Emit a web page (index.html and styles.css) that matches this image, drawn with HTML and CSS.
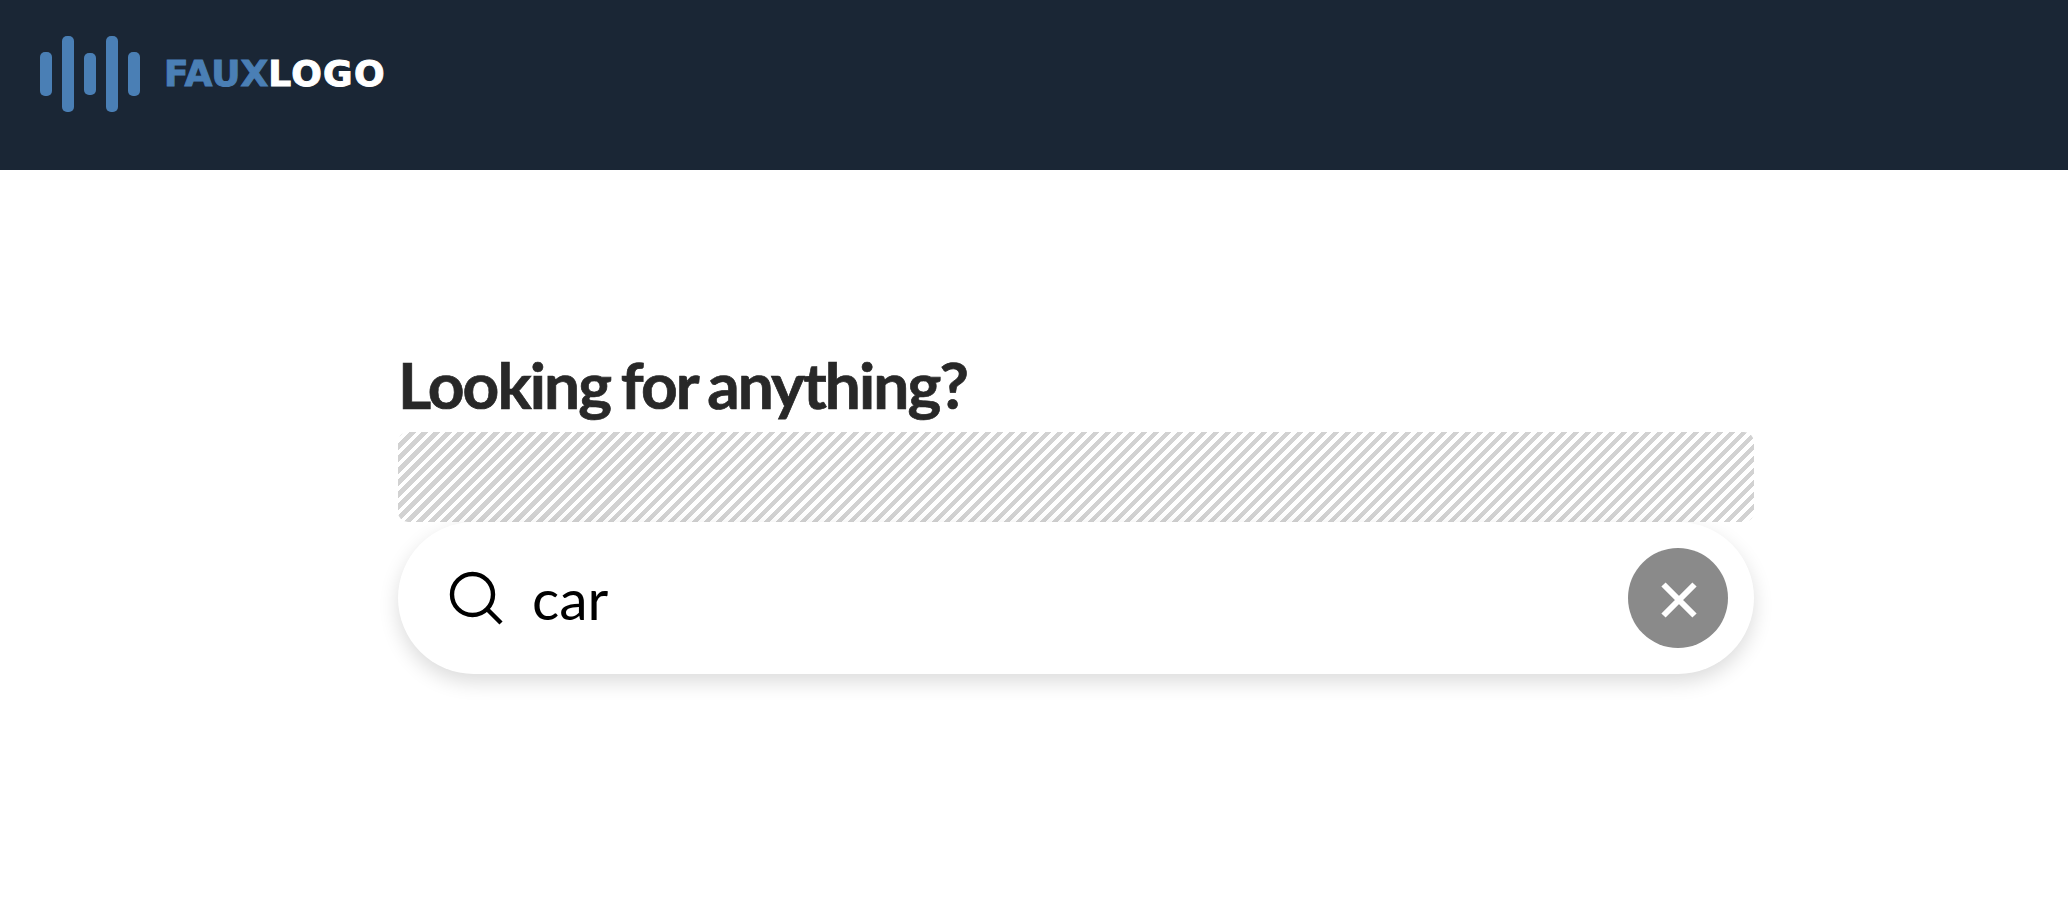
FILE: index.html
```html
<!DOCTYPE html>
<html lang="en">
<head>
    <meta charset="UTF-8">
    <link rel="stylesheet" href="styles.css">
    <title>Search</title>
</head>
<body>
    <header class="site-header">
        <div class="logo">
            <div class="logo-bars">
                <span class="bar bar-mid"></span>
                <span class="bar bar-tall"></span>
                <span class="bar bar-short"></span>
                <span class="bar bar-tall"></span>
                <span class="bar bar-mid"></span>
            </div>
            <div class="logo-text"><span class="logo-faux">FAUX</span>LOGO</div>
        </div>
    </header>

    <main class="content">
        <h1 class="title">Looking for anything?</h1>
        <div class="hatched"></div>
        <div class="search">
            <svg class="search-icon" width="54" height="54" viewBox="0 0 54 54" fill="none" stroke="#000" stroke-width="4.4">
                <circle cx="23.5" cy="23.5" r="20.5"/>
                <path d="M38 38 L52 52"/>
            </svg>
            <span class="search-value">car</span>
            <button class="clear">
                <svg width="40" height="40" viewBox="0 0 40 40" stroke="#fff" stroke-width="6">
                    <path d="M4.5 4.5 L35.5 35.5 M35.5 4.5 L4.5 35.5"/>
                </svg>
            </button>
        </div>
    </main>
</body>
</html>
```

FILE: styles.css
```css
body {
    margin: 0;
    min-height: 100vh;
    background-color: #fff;
    font-family: 'Lato', sans-serif;
}
.site-header {
    height: 170px;
    background-color: #1a2635;
    padding: 36px 40px 0;
    box-sizing: border-box;
}
.logo {
    display: flex;
    align-items: center;
    height: 76px;
}
.logo-bars {
    display: flex;
    align-items: center;
    gap: 10px;
    margin-right: 24px;
}
.bar {
    width: 12px;
    border-radius: 5px;
    background-color: #4a7fb5;
}
.bar-tall { height: 76px; }
.bar-mid { height: 44px; }
.bar-short { height: 42px; }
.logo-text {
    font-family: 'DejaVu Sans', sans-serif;
    font-size: 36px;
    font-weight: 700;
    line-height: 1;
    color: #fff;
    letter-spacing: 1.3px;
    -webkit-text-stroke: 1px #fff;
}
.logo-faux {
    color: #4a7fb5;
    letter-spacing: 0;
    -webkit-text-stroke: 1px #4a7fb5;
}
.content {
    width: 1356px;
    margin-left: 398px;
    padding: 180px 0 60px;
}
.title {
    margin: 0 0 12px;
    font-size: 64px;
    font-weight: 700;
    line-height: 70px;
    letter-spacing: -1.9px;
    word-spacing: -3px;
    color: #282828;
    -webkit-text-stroke: 0.7px #282828;
}
.hatched {
    height: 90px;
    border-radius: 10px;
    background: repeating-linear-gradient(135deg, #d2d2d2 0, #d2d2d2 4.25px, #fff 4.25px, #fff 8.485px);
}
.search {
    display: flex;
    align-items: center;
    height: 152px;
    padding: 0 26px 0 51px;
    border-radius: 76px;
    background-color: #fff;
    box-shadow: 0 8px 20px rgba(0, 0, 0, 0.14);
}
.search-icon {
    flex: none;
    margin-right: 29px;
}
.search-value {
    flex: 1;
    font-size: 57px;
    color: #000;
}
.clear {
    display: flex;
    align-items: center;
    justify-content: center;
    width: 100px;
    height: 100px;
    padding: 4px 0 0 1px;
    border: 0;
    border-radius: 50%;
    background-color: #8a8a8a;
}
```
